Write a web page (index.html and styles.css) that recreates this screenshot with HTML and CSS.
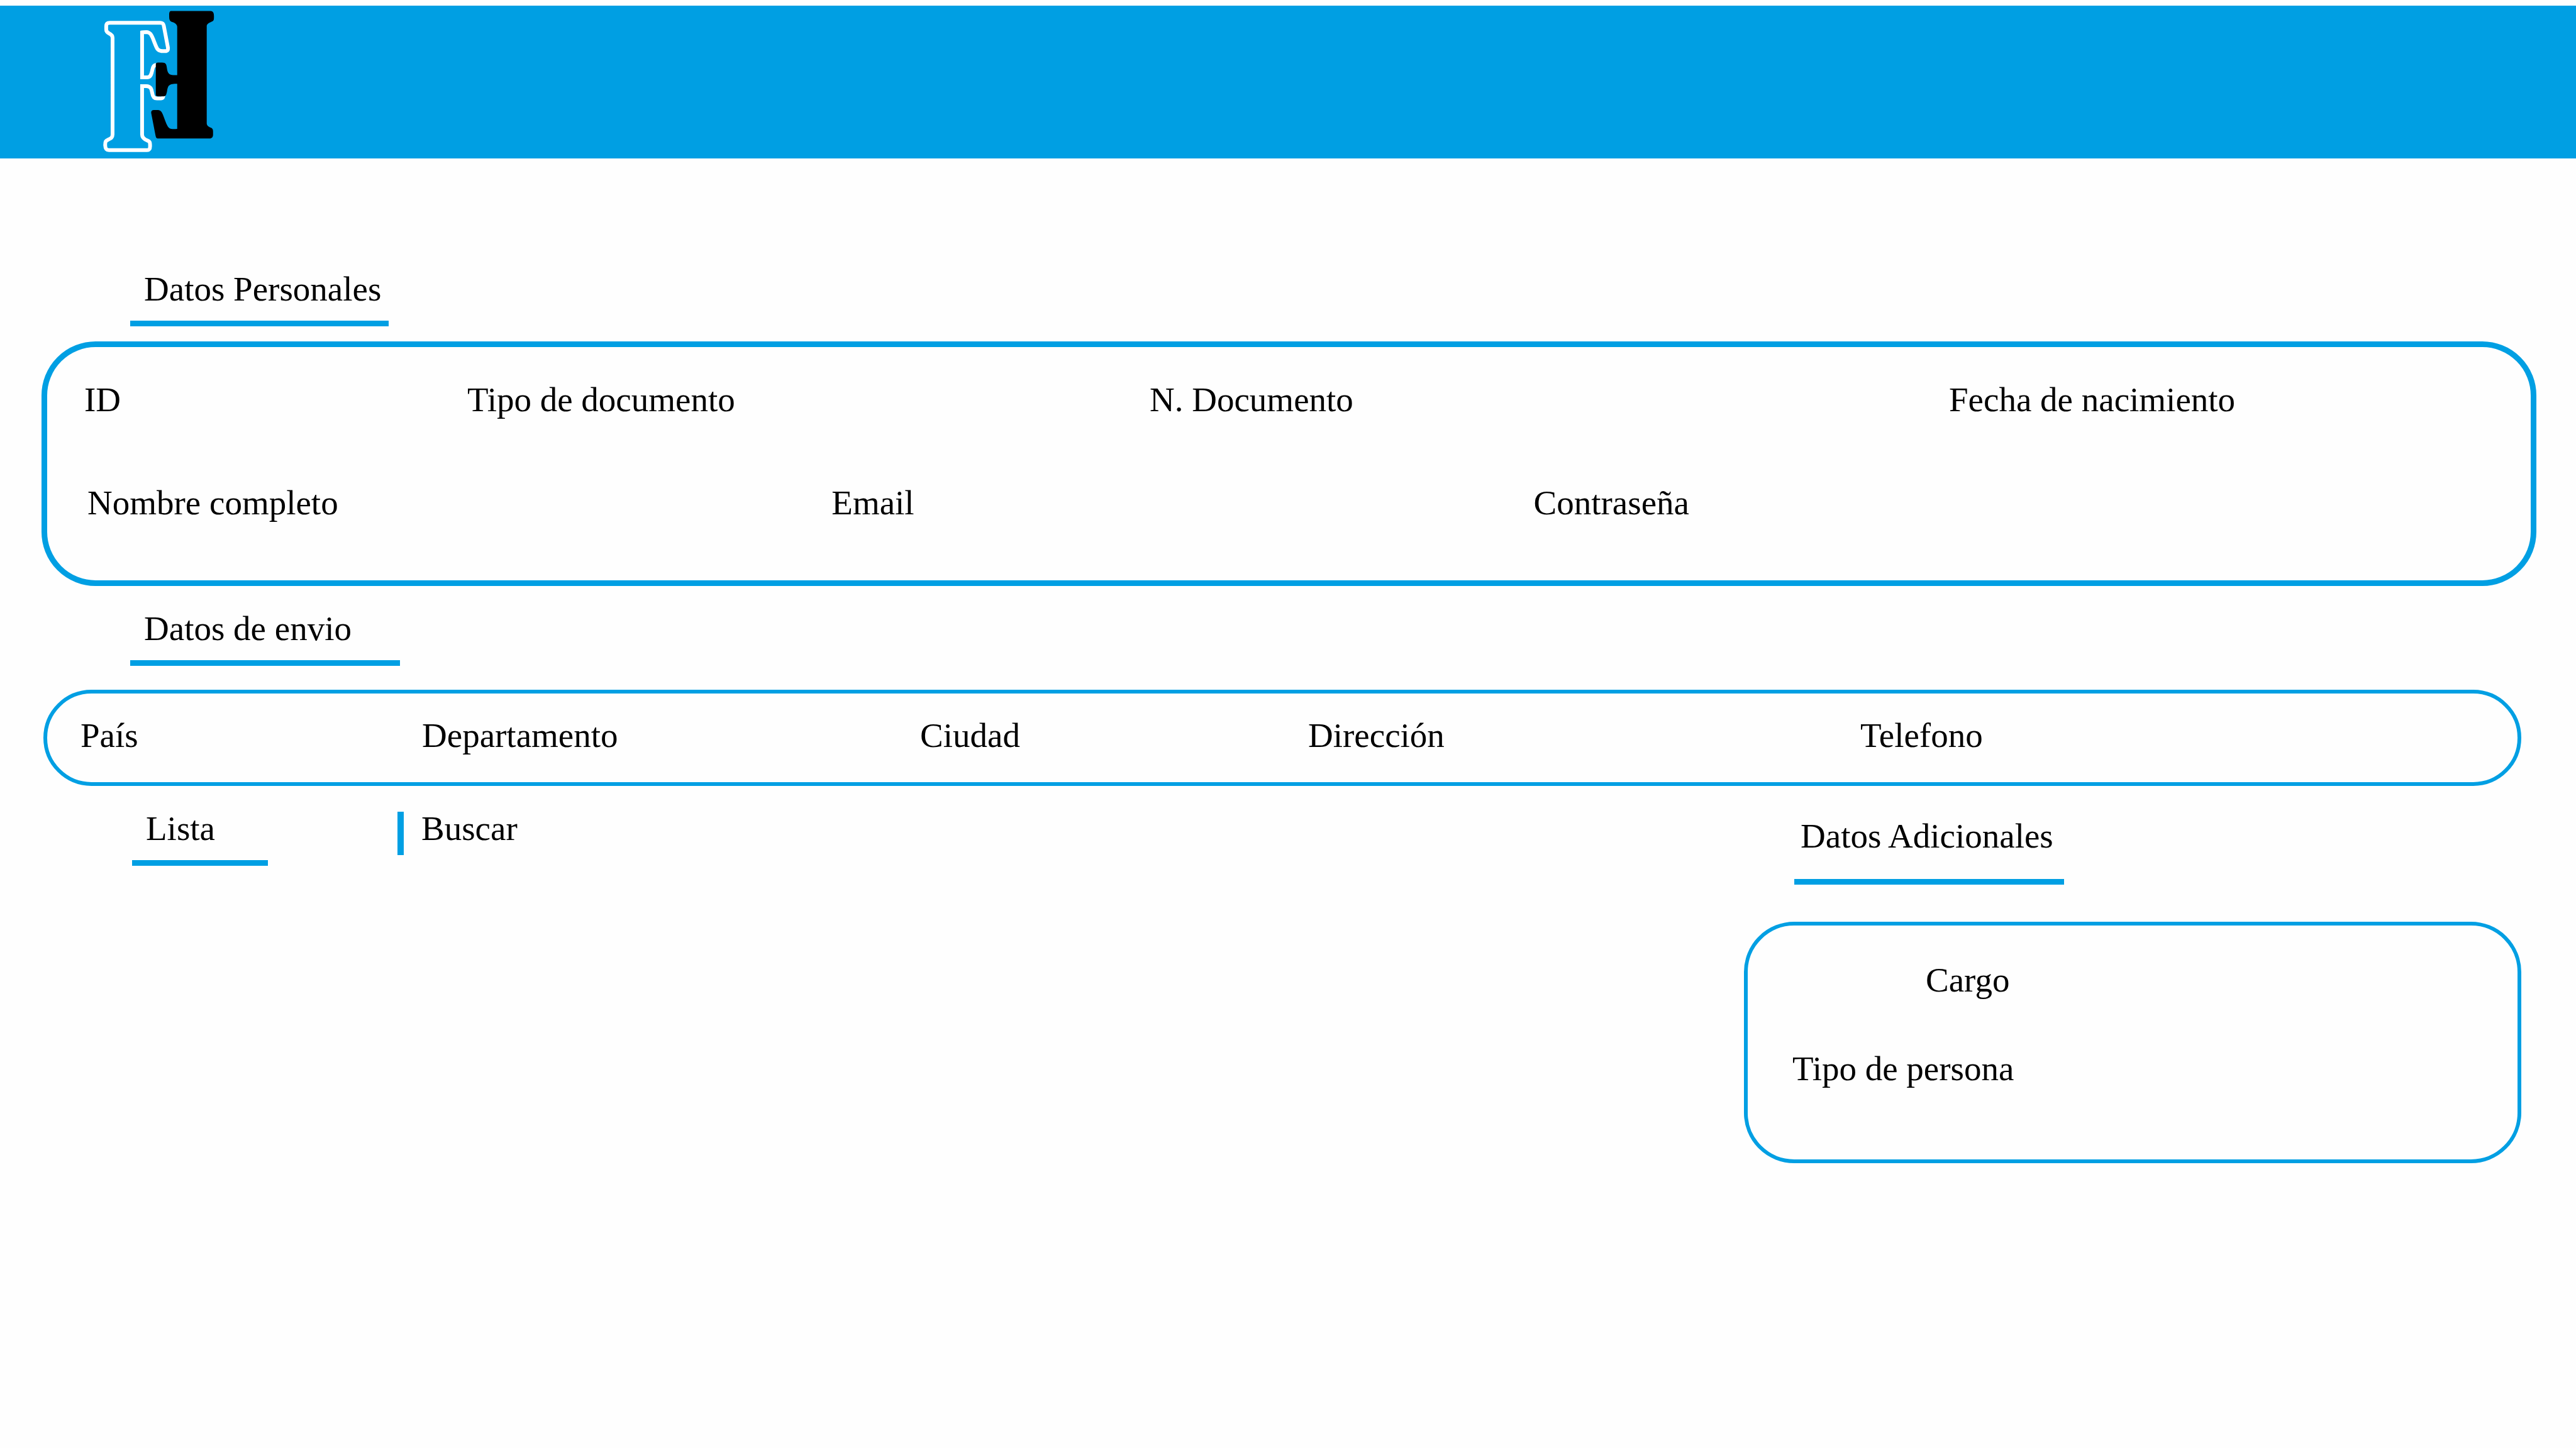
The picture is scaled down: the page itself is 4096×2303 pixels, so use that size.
FILE: index.html
```html
<!DOCTYPE html>
<html lang="es">
<head>
  <meta charset="utf-8">
  <meta name="viewport" content="width=device-width, initial-scale=1">
  <title>Registro</title>
  <link rel="stylesheet" href="styles.css">
</head>
<body>
  <header class="topbar">
    <svg class="logo" viewBox="80 60 750 960" role="img" aria-label="FF">
      <path class="logo-outline" d="M438 433C420 434 415 442 410 465C405 490 400 515 378 515H342V216C350 214 360 214 370 214C396 215 403 232 416 262C430 298 437 319 445 328C453 338 462 341 480 341H495C511 341 516 333 513 315L486 172C483 157 477 153 461 153H128C110 153 104 160 104 175V198C104 212 110 217 122 223C138 231 146 237 146 252V895C146 915 135 920 118 928C100 936 97 940 97 965C98 988 104 998 122 998H375C390 998 395 990 395 972C395 945 394 941 378 935C365 930 342 920 342 895V573H370C400 573 405 595 409 618C413 645 422 655 440 655H468C480 655 482 648 484 636"/>
      <path class="logo-solid" d="M535 75H797C815 75 819 90 819 110C819 135 818 139 803 146C780 157 771 162 771 178V820C771 835 782 842 795 848C810 854 813 860 813 875V895C813 912 805 921 790 921H450C437 921 434 915 431 900L403 755C400 740 406 732 420 732H440C465 732 471 740 480 762C492 792 500 818 510 836C522 858 535 860 575 857V558C515 556 514 575 508 605C503 632 500 641 485 641H447C436 641 433 637 433 628V430C433 420 438 417 447 417H475C500 417 504 430 507 455C511 485 520 500 550 500H575V180C575 165 562 155 545 149C528 143 522 135 522 115C521 90 522 75 535 75Z"/>
    </svg>
  </header>

  <main class="page">
    <form class="record">
      <h2 class="title title-personal">Datos Personales</h2>
      <section class="panel panel-personal">
        <div class="row row-identity">
          <div class="field"><label for="id">ID</label><input id="id" type="text"></div>
          <div class="field"><label for="doc-type">Tipo de documento</label><input id="doc-type" type="text"></div>
          <div class="field"><label for="doc-number">N. Documento</label><input id="doc-number" type="text"></div>
          <div class="field"><label for="birth">Fecha de nacimiento</label><input id="birth" type="text"></div>
        </div>
        <div class="row row-account">
          <div class="field"><label for="name">Nombre completo</label><input id="name" type="text"></div>
          <div class="field"><label for="email">Email</label><input id="email" type="email"></div>
          <div class="field"><label for="password">Contraseña</label><input id="password" type="password"></div>
        </div>
      </section>

      <h2 class="title title-shipping">Datos de envio</h2>
      <section class="panel panel-shipping">
        <div class="row row-address">
          <div class="field"><label for="country">País</label><input id="country" type="text"></div>
          <div class="field"><label for="state">Departamento</label><input id="state" type="text"></div>
          <div class="field"><label for="city">Ciudad</label><input id="city" type="text"></div>
          <div class="field"><label for="address">Dirección</label><input id="address" type="text"></div>
          <div class="field"><label for="phone">Telefono</label><input id="phone" type="tel"></div>
        </div>
      </section>

      <div class="lower">
        <section class="list">
          <h2 class="title title-list">Lista</h2>
          <div class="field search"><label for="search">Buscar</label><input id="search" type="search"></div>
        </section>
        <section class="extra">
          <h2 class="title title-extra">Datos Adicionales</h2>
          <div class="panel panel-extra">
            <div class="field field-role"><label for="role">Cargo</label><input id="role" type="text"></div>
            <div class="field"><label for="person-type">Tipo de persona</label><input id="person-type" type="text"></div>
          </div>
        </section>
      </div>
    </form>
  </main>
</body>
</html>
```

FILE: styles.css
```css
:root {
  --blue: #009fe3;
  --paper: #fefefe;
}

* {
  box-sizing: border-box;
}

body {
  margin: 0;
  background: var(--paper);
  color: #000;
  font-family: "Liberation Serif", "Times New Roman", serif;
  font-size: 55px;
  line-height: 64px;
}

.topbar {
  margin-top: 9px;
  height: 243px;
  padding: 5px 163px;
  background: var(--blue);
}

.logo {
  display: block;
  width: 180px;
  height: 230px;
}

.logo-outline {
  fill: none;
  stroke: #fff;
  stroke-width: 25;
}

.logo-solid {
  fill: #000;
}

.page {
  padding: 176px 63px 0 66px;
}

.title {
  width: fit-content;
  margin: 0 0 0 141px;
  padding: 0 0 18px 22px;
  border-bottom: 9px solid var(--blue);
  font-size: inherit;
  font-weight: normal;
}

.title-personal {
  min-width: 411px;
  margin-bottom: 24px;
}

.title-shipping {
  min-width: 429px;
  margin-top: 36px;
  margin-bottom: 38px;
}

.title-list {
  min-width: 216px;
}

.title-extra {
  min-width: 429px;
  margin-left: 80px;
  margin-bottom: 59px;
  padding: 0 0 36px 10px;
}

.panel {
  border: 6px solid var(--blue);
  border-radius: 80px;
}

.panel-personal {
  display: grid;
  gap: 100px;
  padding: 52px 60px 91px 59px;
  border-width: 9px;
  border-radius: 86px;
}

.panel-shipping {
  margin: 0 24px 0 3px;
  padding: 35px 53px 42px;
}

.panel-extra {
  display: grid;
  gap: 77px;
  padding: 55px 71px 112px;
}

.row {
  display: grid;
}

.row-identity {
  grid-template-columns: 609fr 1085fr 1271fr 865fr;
}

.row-account {
  grid-template-columns: 1183fr 1116fr 1525fr;
  padding-left: 5px;
}

.row-address {
  grid-template-columns: 543fr 792fr 617fr 878fr 992fr;
}

.field {
  display: flex;
  gap: 16px;
  min-width: 0;
}

.field label {
  white-space: nowrap;
}

.field input {
  flex: 1;
  width: 0;
  min-width: 0;
  padding: 0;
  border: 0;
  outline: 0;
  background: transparent;
  color: inherit;
  font: inherit;
}

.field-role {
  padding-left: 212px;
}

.lower {
  display: grid;
  grid-template-columns: 2704fr 1236fr;
  margin: 0 24px 0 3px;
}

.list {
  display: flex;
  align-items: flex-start;
  gap: 206px;
  padding-top: 36px;
}

.search {
  flex: 1;
  height: 69px;
  margin-top: 5px;
  padding-left: 28px;
  border-left: 10px solid var(--blue);
  line-height: 54px;
}

.extra {
  padding-top: 48px;
}
```
